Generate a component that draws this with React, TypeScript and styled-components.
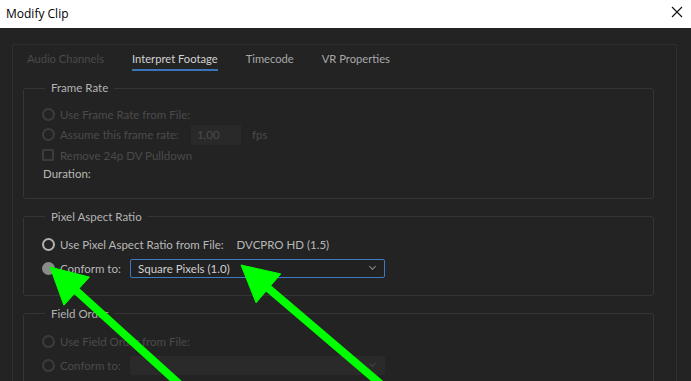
import React from "react";
import styled, { createGlobalStyle } from "styled-components";

const GlobalStyle = createGlobalStyle`
    html, body {
        margin: 0;
        padding: 0;
        background: #232323;
    }
    * {
        box-sizing: border-box;
    }
`;

const FONT = `Lato, "Open Sans", sans-serif`;

const Window = styled.div`
    position: relative;
    width: 691px;
    height: 381px;
    overflow: hidden;
    background: #232323;
    font-family: ${FONT};
`;

const TitleBar = styled.div`
    height: 28px;
    background: #ffffff;
    display: flex;
    align-items: center;
    justify-content: space-between;
    padding: 0 8px 2px 6px;
`;

const Title = styled.div`
    font-family: "Open Sans", "Noto Sans", sans-serif;
    font-size: 12px;
    color: #000;
`;

const Close = styled.div`
    display: flex;
    align-items: center;
    margin-top: -2px;
`;

const Body = styled.div`
    padding: 16px 14px 0 12px;
`;

const Panel = styled.div`
    border: 1px solid #2f2f2f;
    border-radius: 2px;
    height: 400px;
`;

const Tabs = styled.div`
    display: flex;
    gap: 28px;
    padding: 5px 0 0 14px;
    height: 26px;
`;

const Tab = styled.div<{ state: "disabled" | "active" | "normal" }>`
    font-size: 11.2px;
    height: 21px;
    line-height: 18px;
    color: ${(p) =>
        p.state === "disabled"
            ? "#4a4a4a"
            : p.state === "active"
            ? "#d2d2d2"
            : "#a8a8a8"};
    border-bottom: 2px solid
        ${(p) => (p.state === "active" ? "#3a73b8" : "transparent")};
`;

const Content = styled.div`
    display: flex;
    flex-direction: column;
    gap: 10px;
    padding: 9px 22px 0 10px;
`;

const Group = styled.fieldset<{ gap?: number; pad: string }>`
    margin: 0;
    border: 1px solid #353535;
    border-radius: 3px;
    padding: ${(p) => p.pad};
    display: flex;
    flex-direction: column;
    gap: ${(p) => p.gap ?? 0}px;
    min-width: 0;
`;

const Legend = styled.legend`
    font-size: 11.5px;
    color: #b4b4b4;
    padding: 0 6px;
    margin-left: 3px;
    line-height: 16px;
`;

const Row = styled.div<{ short?: boolean }>`
    display: flex;
    align-items: center;
    height: ${(p) => (p.short ? 15 : 20.5)}px;
`;

const Radio = styled.span<{ state: "disabled" | "on" | "selected" }>`
    width: 13px;
    height: 13px;
    border-radius: 50%;
    flex: none;
    margin-right: 5px;
    border: 2px solid
        ${(p) =>
            p.state === "disabled"
                ? "#3c3c3c"
                : p.state === "on"
                ? "#b2b2b2"
                : "#8a8a8a"};
    background: ${(p) => (p.state === "selected" ? "#8a8a8a" : "transparent")};
`;

const Check = styled.span`
    width: 12px;
    height: 12px;
    flex: none;
    margin-right: 6px;
    border: 2px solid #3c3c3c;
    border-radius: 1px;
`;

const Label = styled.span<{ disabled?: boolean; wide?: boolean; indent?: boolean }>`
    font-size: 11.5px;
    color: ${(p) => (p.disabled ? "#4b4b4b" : "#b8b8b8")};
    width: ${(p) => (p.wide ? "70px" : "auto")};
    flex: none;
    margin-left: ${(p) => (p.indent ? "1px" : "0")};
    white-space: nowrap;
`;

const Value = styled.span`
    font-size: 11.5px;
    color: #b8b8b8;
    margin-left: 13px;
`;

const NumInput = styled.span`
    width: 50px;
    height: 20px;
    margin-left: 12px;
    padding-left: 6px;
    background: #292929;
    color: #4b4b4b;
    font-size: 11.5px;
    display: flex;
    align-items: center;
`;

const Unit = styled.span`
    font-size: 11.5px;
    color: #4b4b4b;
    margin-left: 11px;
`;

const Select = styled.div<{ active?: boolean }>`
    width: 255px;
    height: 19px;
    display: flex;
    align-items: center;
    justify-content: space-between;
    padding: 0 6px 0 7px;
    border-radius: 2px;
    font-size: 11.5px;
    color: #d0d0d0;
    background: ${(p) => (p.active ? "#212121" : "#2a2a2a")};
    border: 1px solid ${(p) => (p.active ? "#3d7ac4" : "#2a2a2a")};
`;

const Chevron = styled.span<{ active?: boolean }>`
    width: 5px;
    height: 5px;
    margin-top: -3px;
    margin-right: 3px;
    border-right: 1px solid ${(p) => (p.active ? "#8a8a8a" : "#444")};
    border-bottom: 1px solid ${(p) => (p.active ? "#8a8a8a" : "#444")};
    transform: rotate(45deg);
`;

const Overlay = styled.svg`
    position: absolute;
    left: 0;
    top: 0;
    width: 691px;
    height: 381px;
    pointer-events: none;
`;

// green annotation arrow drawn over the dialog
function Arrow(props: { tip: [number, number]; tail: [number, number] }) {
    const [x1, y1] = props.tip;
    const [x2, y2] = props.tail;
    const len = Math.hypot(x2 - x1, y2 - y1);
    const ux = (x2 - x1) / len;
    const uy = (y2 - y1) / len;
    const nx = -uy;
    const ny = ux;
    const L = 36;
    const W = 19;
    const bx = x1 + ux * L;
    const by = y1 + uy * L;
    const pts = `${x1},${y1} ${bx + nx * W},${by + ny * W} ${bx - nx * W},${by - ny * W}`;
    return (
        <g fill="#0f0" stroke="#0f0">
            <line
                x1={x1 + ux * (L - 6)}
                y1={y1 + uy * (L - 6)}
                x2={x2}
                y2={y2}
                strokeWidth={8}
            />
            <polygon points={pts} strokeWidth={1} strokeLinejoin="round" />
        </g>
    );
}

function App() {
    return (
        <>
            <GlobalStyle />
            <Window>
                <TitleBar>
                    <Title>Modify Clip</Title>
                    <Close>
                        <svg width="12" height="12" viewBox="0 0 12 12">
                            <path
                                d="M1 1 L11 11 M11 1 L1 11"
                                stroke="#111"
                                strokeWidth="1.1"
                                fill="none"
                            />
                        </svg>
                    </Close>
                </TitleBar>
                <Body>
                    <Panel>
                        <Tabs>
                            <Tab state="disabled">Audio Channels</Tab>
                            <Tab state="active">Interpret Footage</Tab>
                            <Tab state="normal">Timecode</Tab>
                            <Tab state="normal">VR Properties</Tab>
                        </Tabs>
                        <Content>
                            <Group pad="8px 18px 17px">
                                <Legend>Frame Rate</Legend>
                                <Row>
                                    <Radio state="disabled" />
                                    <Label disabled>Use Frame Rate from File:</Label>
                                </Row>
                                <Row>
                                    <Radio state="disabled" />
                                    <Label disabled>Assume this frame rate:</Label>
                                    <NumInput>1,00</NumInput>
                                    <Unit>fps</Unit>
                                </Row>
                                <Row>
                                    <Check />
                                    <Label disabled>Remove 24p DV Pulldown</Label>
                                </Row>
                                <Row short>
                                    <Label indent>Duration:</Label>
                                </Row>
                            </Group>
                            <Group gap={3} pad="10px 18px 16px">
                                <Legend>Pixel Aspect Ratio</Legend>
                                <Row>
                                    <Radio state="on" />
                                    <Label>Use Pixel Aspect Ratio from File:</Label>
                                    <Value>DVCPRO HD (1.5)</Value>
                                </Row>
                                <Row>
                                    <Radio state="selected" />
                                    <Label wide>Conform to:</Label>
                                    <Select active>
                                        <span>Square Pixels (1.0)</span>
                                        <Chevron active />
                                    </Select>
                                </Row>
                            </Group>
                            <Group gap={3} pad="10px 18px 16px">
                                <Legend>Field Order</Legend>
                                <Row>
                                    <Radio state="disabled" />
                                    <Label disabled>Use Field Order from File:</Label>
                                </Row>
                                <Row>
                                    <Radio state="disabled" />
                                    <Label disabled wide>
                                        Conform to:
                                    </Label>
                                    <Select>
                                        <span></span>
                                        <Chevron />
                                    </Select>
                                </Row>
                            </Group>
                        </Content>
                    </Panel>
                </Body>
                <Overlay viewBox="0 0 691 381">
                    <Arrow tip={[50, 267]} tail={[188, 392]} />
                    <Arrow tip={[241, 265]} tail={[390, 392]} />
                </Overlay>
            </Window>
        </>
    );
}

export default App;
